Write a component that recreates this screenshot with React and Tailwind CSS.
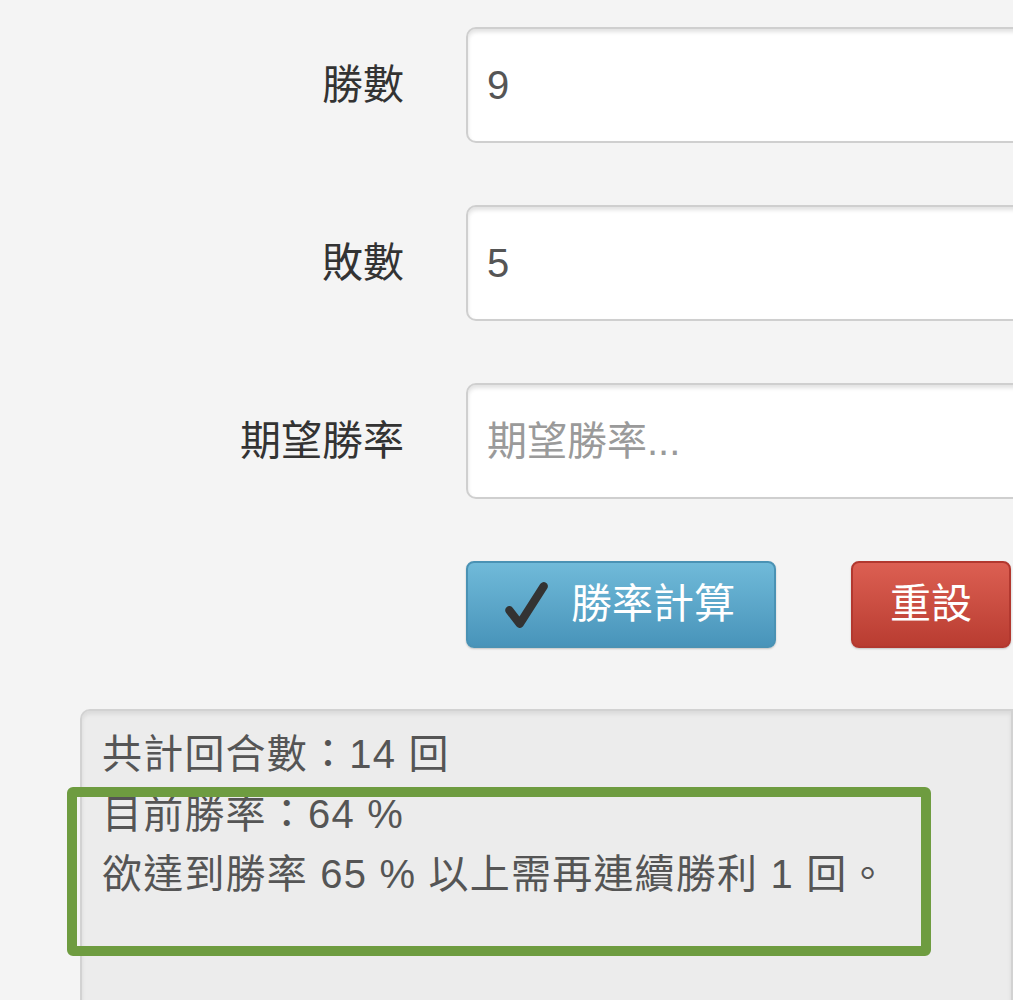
import React from "react";

const font = { fontFamily: '"Liberation Sans", "Noto Sans CJK TC", sans-serif' };

const Field = ({ label, value, placeholder }) => (
  <div className="flex items-center h-[116px] mb-[62px]">
    <label className="w-[404px] shrink-0 text-right text-[41px] text-[#333] leading-none">
      {label}
    </label>
    <div className="ml-[62px] w-[620px] h-[116px] shrink-0 bg-white border-2 border-[#cfcfcf] rounded-[10px] shadow-[inset_0_3px_4px_rgba(0,0,0,0.12)] flex items-center pl-[19px]">
      {value ? (
        <span className="text-[40px] text-[#555]">{value}</span>
      ) : (
        <span className="text-[40px] text-[#9a9a9a]">{placeholder}</span>
      )}
    </div>
  </div>
);

export default function App() {
  return (
    <div
      className="relative w-[1013px] h-[1000px] overflow-hidden bg-[#f4f4f4]"
      style={font}
    >
      <div className="pt-[27px]">
        <Field label="勝數" value="9" />
        <Field label="敗數" value="5" />
        <Field label="期望勝率" placeholder="期望勝率..." />

        <div className="flex items-center ml-[466px]">
          <button className="w-[310px] h-[87px] shrink-0 rounded-[8px] border-2 border-[#4a92b4] bg-gradient-to-b from-[#70bad9] to-[#4894ba] flex items-center justify-center gap-[20px] shadow-[0_1px_2px_rgba(0,0,0,0.2)]">
            <svg width="50" height="50" viewBox="0 0 48 48" className="-ml-[6px]">
              <path
                d="M8 29 L18 42 L41 6"
                fill="none"
                stroke="#333"
                strokeWidth="8"
                strokeLinecap="round"
                strokeLinejoin="round"
              />
            </svg>
            <span className="text-[41px] text-white leading-none">勝率計算</span>
          </button>
          <button className="ml-[75px] w-[160px] h-[87px] shrink-0 rounded-[8px] border-2 border-[#b2382f] bg-gradient-to-b from-[#dc5f52] to-[#b93c31] flex items-center justify-center shadow-[0_1px_2px_rgba(0,0,0,0.2)]">
            <span className="text-[41px] text-white leading-none">重設</span>
          </button>
        </div>

        <div className="mt-[61px] ml-[80px] h-[400px] bg-[#ececec] border-2 border-[#d2d2d2] rounded-tl-[10px] shadow-[inset_0_3px_4px_rgba(0,0,0,0.08)] pt-[13px] pl-[20px] text-[40px] leading-[60px] tracking-[1.2px] text-[#555]">
          <div>共計回合數：14 回</div>
          <div>目前勝率：64 %</div>
          <div>欲達到勝率 65 % 以上需再連續勝利 1 回。</div>
        </div>
      </div>

      <div className="absolute left-[67px] top-[787px] w-[864px] h-[169px] border-[10px] border-[#6e9c40] rounded-[6px]" />
    </div>
  );
}
